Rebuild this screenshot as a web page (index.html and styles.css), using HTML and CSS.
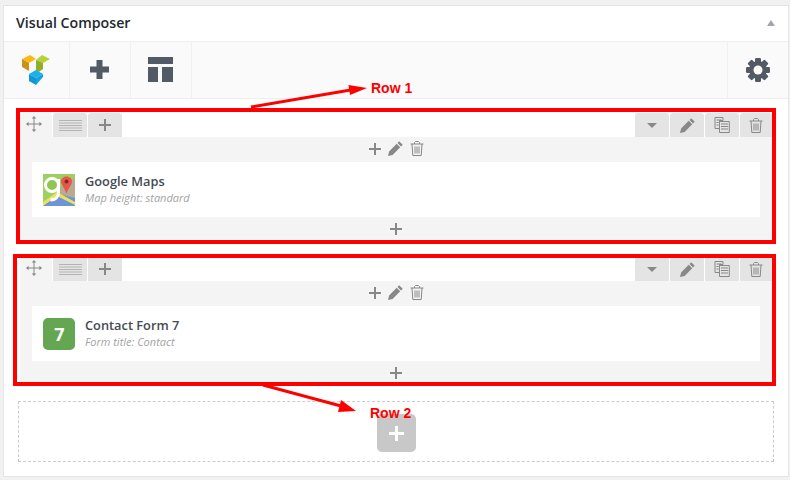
FILE: index.html
```html
<!DOCTYPE html>
<html lang="en">
<head>
  <meta charset="UTF-8" />
  <title>Visual Composer</title>
  <link rel="stylesheet" href="styles.css">
</head>
<body>

  <svg class="defs" width="0" height="0">
    <symbol id="i-plus" viewBox="0 0 12 12">
      <path d="M5 0h2v5h5v2H7v5H5V7H0V5h5z" />
    </symbol>
    <symbol id="i-move" viewBox="0 0 16 16">
      <path d="M8 0l2.300 2.600H8.500v4.900h4.900V5.700L16 8l-2.600 2.300V8.500H8.500v4.900h1.800L8 16l-2.300-2.600h1.800V8.500H2.600v1.800L0 8l2.600-2.300v1.800h4.900V2.600H5.700z" />
    </symbol>
    <symbol id="i-lines" viewBox="0 0 23 11">
      <path d="M0 0h23v1H0zM0 2.500h23v1H0zM0 5h23v1H0zM0 7.500h23v1H0zM0 10h23v1H0z" />
    </symbol>
    <symbol id="i-pencil" viewBox="0 0 15 15">
      <path d="M11.200.3l3.500 3.500-1.700 1.700-3.500-3.500zM8.700 2.800l3.500 3.500-7.600 7.600L0 15l1.100-4.600z" />
    </symbol>
    <symbol id="i-copy" viewBox="0 0 16 16">
      <path fill="none" stroke="currentColor" d="M1 .5h8v3H5.500v8H1zM5.500 4.500h9.800v11H5.500zM2.500 3h5M2.500 5.500h2M2.500 8h2M7 7h7M7 9.500h7M7 12h7" />
    </symbol>
    <symbol id="i-trash" viewBox="0 0 14 15">
      <path fill="none" stroke="currentColor" d="M.5 3h13M2 3l.8 11.500h8.400L12 3M4.500 3V1.500L5.500.5h3l1 1V3M5 5.500v7M7 5.500v7M9 5.500v7" />
    </symbol>
  </svg>

  <div class="panel">
    <div class="panel-head">
      <h2>Visual Composer</h2>
      <span class="collapse"></span>
    </div>

    <div class="toolbar">
      <div class="tool">
        <svg width="28" height="31" viewBox="23 53 28 31">
          <path fill="#fdb813" d="M23 58l8-4 6 4-7 4z" />
          <path fill="#c8921c" d="M23 58l7 4v8l-7-4z" />
          <path fill="#b5d334" d="M37 59l6-5 8 4-7 4z" />
          <path fill="#8fae2b" d="M37 59l7 3v6l-7 5z" />
          <path fill="#1bb0ee" d="M30 73l7-4 7 4-7 4z" />
          <path fill="#1097d0" d="M30 73l7 4v7l-7-4z" />
          <path fill="#10a5e2" d="M37 77l7-4v3l-7 8z" />
        </svg>
      </div>
      <div class="tool">
        <svg class="tool-dark" width="19" height="19" viewBox="0 0 19 19"><path d="M6.500 0h6v6.500H19v6h-6.500V19h-6v-6.500H0v-6h6.500z" /></svg>
      </div>
      <div class="tool">
        <svg class="tool-dark" width="25" height="25" viewBox="0 0 25 25"><path d="M0 0h25v7H0zM0 10h10v15H0zM14 10h11v15H14z" /></svg>
      </div>
      <div class="tool tool-right">
        <svg class="tool-dark" width="24" height="24" viewBox="-12 -12 24 24">
          <rect x="-3" y="-12" width="6" height="24" rx="1.200" />
          <rect x="-3" y="-12" width="6" height="24" rx="1.200" transform="rotate(45)" />
          <rect x="-3" y="-12" width="6" height="24" rx="1.200" transform="rotate(90)" />
          <rect x="-3" y="-12" width="6" height="24" rx="1.200" transform="rotate(135)" />
          <circle r="9" />
          <circle class="gear-hole" r="4.500" />
        </svg>
      </div>
    </div>

    <div class="rows">

      <div class="row">
        <div class="row-tabs">
          <span class="tab tab-move"><svg width="16" height="16"><use href="#i-move" /></svg></span>
          <span class="tab"><svg class="lines" width="23" height="11"><use href="#i-lines" /></svg></span>
          <span class="tab"><svg width="12" height="12"><use href="#i-plus" /></svg></span>
          <span class="tabs-gap"></span>
          <span class="tab"><span class="caret"></span></span>
          <span class="tab"><svg width="15" height="15"><use href="#i-pencil" /></svg></span>
          <span class="tab"><svg width="16" height="16"><use href="#i-copy" /></svg></span>
          <span class="tab tab-last"><svg width="14" height="15"><use href="#i-trash" /></svg></span>
        </div>
        <div class="row-body">
          <div class="col-controls">
            <svg width="12" height="12"><use href="#i-plus" /></svg>
            <svg width="15" height="15"><use href="#i-pencil" /></svg>
            <svg width="14" height="15"><use href="#i-trash" /></svg>
          </div>
          <div class="element">
            <svg class="el-icon" width="32" height="32" viewBox="0 0 32 32">
              <rect width="32" height="32" fill="#b8ab90" />
              <path fill="#9fce63" d="M0 0h32v4L16 14 8 32H0z" />
              <path fill="#6f94d6" d="M0 32l8-7 12-4 12 3v8z" />
              <path fill="#e9e25f" d="M0 28l14-10 18 10v3L14 22 0 32z" />
              <circle cx="9" cy="11" r="6.500" fill="#8fc651" stroke="#fff" stroke-width="3" />
              <path fill="none" stroke="#fff" stroke-width="3" d="M15.500 5v13c0 5-3 8-8 8" />
              <path fill="#e8564b" d="M23.500 2.500c3.500 0 5.500 2.500 5.500 5 0 3.500-3.500 6-5.500 12-2-6-5.500-8.500-5.500-12 0-2.500 2-5 5.500-5z" />
              <circle cx="23.500" cy="7.500" r="2" fill="#7d2a24" />
            </svg>
            <div class="el-text">
              <strong>Google Maps</strong>
              <em>Map height: standard</em>
            </div>
          </div>
          <div class="col-add"><svg width="12" height="12"><use href="#i-plus" /></svg></div>
        </div>
      </div>

      <div class="row">
        <div class="row-tabs">
          <span class="tab tab-move"><svg width="16" height="16"><use href="#i-move" /></svg></span>
          <span class="tab"><svg class="lines" width="23" height="11"><use href="#i-lines" /></svg></span>
          <span class="tab"><svg width="12" height="12"><use href="#i-plus" /></svg></span>
          <span class="tabs-gap"></span>
          <span class="tab"><span class="caret"></span></span>
          <span class="tab"><svg width="15" height="15"><use href="#i-pencil" /></svg></span>
          <span class="tab"><svg width="16" height="16"><use href="#i-copy" /></svg></span>
          <span class="tab tab-last"><svg width="14" height="15"><use href="#i-trash" /></svg></span>
        </div>
        <div class="row-body">
          <div class="col-controls">
            <svg width="12" height="12"><use href="#i-plus" /></svg>
            <svg width="15" height="15"><use href="#i-pencil" /></svg>
            <svg width="14" height="15"><use href="#i-trash" /></svg>
          </div>
          <div class="element">
            <span class="el-seven">7</span>
            <div class="el-text">
              <strong>Contact Form 7</strong>
              <em>Form title: Contact</em>
            </div>
          </div>
          <div class="col-add"><svg width="12" height="12"><use href="#i-plus" /></svg></div>
        </div>
      </div>

      <div class="dropzone">
        <span class="drop-btn"><svg width="15" height="15" viewBox="0 0 15 15"><path d="M6 0h3v6h6v3H9v6H6V9H0V6h6z" /></svg></span>
      </div>
    </div>
  </div>

  <!-- red notes drawn over the screenshot -->
  <div class="mark mark-1"></div>
  <div class="mark mark-2"></div>
  <svg class="arrows" width="790" height="480">
    <path d="M251 107l101-17.200" stroke="#f00" stroke-width="3" fill="none" />
    <path d="M367 88l-17 7-1.500-10z" fill="#f00" />
    <path d="M263 385l78 21" stroke="#f00" stroke-width="3" fill="none" />
    <path d="M356 411l-18 1 3-12z" fill="#f00" />
  </svg>
  <span class="note note-1">Row 1</span>
  <span class="note note-2">Row 2</span>

</body>
</html>
```

FILE: styles.css
```css
* { margin: 0; padding: 0; box-sizing: border-box; }
html, body {
  height: 100%;
  overflow: hidden;
  background: #f1f1f1;
  font-family: "Open Sans", sans-serif;
}

body { padding: 5px 1px 0 3px; position: relative; }

.defs { position: absolute; }

.panel {
  background: #fff;
  border: 1px solid #e5e5e5;
  height: 472px;
}

.panel-head {
  display: flex;
  align-items: center;
  justify-content: space-between;
  height: 36px;
  padding: 0 13px 2px 12px;
  border-bottom: 1px solid #eee;
}

.panel-head h2 {
  font-size: 14.200px;
  font-weight: 600;
  color: #23282d;
}

.collapse {
  width: 0;
  height: 0;
  border-left: 4.500px solid transparent;
  border-right: 4.500px solid transparent;
  border-bottom: 6px solid #a0a5aa;
}

.toolbar {
  display: flex;
  height: 57px;
  background: #fafafa;
  border-bottom: 1px solid #eee;
}

.tool {
  width: 61px;
  display: flex;
  align-items: center;
  justify-content: center;
  padding: 0 1px 1px 0;
  border-right: 1px solid #f0f0f0;
}

.tool:first-child { width: 66px; }

.tool-right {
  margin-left: auto;
  border-right: 0;
  border-left: 1px solid #f0f0f0;
}

.tool-dark { fill: #525b65; }
.gear-hole { fill: #fafafa; }

.rows { padding: 14px 14px 0; }

.row {
  margin: 0 2px 18px;
  height: 126px;
  display: flex;
  flex-direction: column;
}

.row svg { fill: #888; color: #888; }

.row-tabs {
  display: flex;
  gap: 1px;
  height: 24px;
}

.tab {
  width: 34px;
  background: #e4e4e4;
  border-radius: 3px 3px 0 0;
  display: flex;
  align-items: center;
  justify-content: center;
}

.tab-move { width: 32px; background: #f4f4f4; padding: 0 5px 2px 0; }
.tab-last { width: 32px; }
.tabs-gap { flex: 1; }

.row .lines { fill: #b4b4b4; }

.caret {
  width: 0;
  height: 0;
  border-left: 5px solid transparent;
  border-right: 5px solid transparent;
  border-top: 5px solid #888;
}

.row-body {
  flex: 1;
  background: #f4f4f4;
  padding: 0 12px;
  display: flex;
  flex-direction: column;
}

.col-controls {
  height: 25px;
  padding-bottom: 2px;
  display: flex;
  align-items: center;
  justify-content: center;
  gap: 7px;
}

.element {
  height: 55px;
  background: #fff;
  display: flex;
  align-items: center;
  gap: 10px;
  padding: 0 11px;
}

.el-icon { flex: none; }

.el-seven {
  width: 32px;
  height: 32px;
  flex: none;
  background: #64a651;
  border-radius: 5px;
  padding-left: 1px;
  color: #fff;
  font-size: 18px;
  font-weight: 700;
  line-height: 32px;
  text-align: center;
}

.el-text { padding-bottom: 3px; }

.el-text strong {
  display: block;
  font-size: 12.800px;
  font-weight: 600;
  line-height: 18px;
  color: #454a52;
}

.el-text em {
  display: block;
  font-size: 11px;
  line-height: 15px;
  color: #a3a3a3;
}

.col-add {
  flex: 1;
  padding-top: 2px;
  display: flex;
  align-items: center;
  justify-content: center;
}

.dropzone {
  height: 61px;
  border: 1px dashed #ccc;
  display: flex;
  justify-content: center;
  padding-top: 12px;
}

.drop-btn {
  width: 39px;
  height: 38px;
  background: #c8c8c8;
  border-radius: 5px;
  display: flex;
  align-items: center;
  justify-content: center;
  fill: #fff;
}

.mark {
  position: absolute;
  border: 4px solid #f00;
}

.mark-1 { left: 16px; top: 108px; width: 760px; height: 136px; }
.mark-2 { left: 13px; top: 254px; width: 763px; height: 132px; }

.arrows { position: absolute; left: 0; top: 0; }

.note {
  position: absolute;
  font-family: "Liberation Sans", sans-serif;
  font-size: 14px;
  font-weight: 700;
  color: #f00;
  line-height: 16px;
}

.note-1 { left: 371px; top: 80px; }
.note-2 { left: 370px; top: 405px; }
```
